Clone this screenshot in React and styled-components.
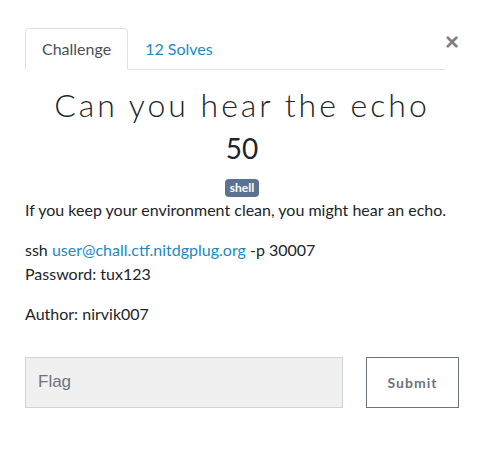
import React from "react";
import styled, { createGlobalStyle } from "styled-components";

const Global = createGlobalStyle`
  html, body { margin: 0; padding: 0; background: #fff; }
  body {
    font-family: Lato, "Liberation Sans", sans-serif;
    font-size: 16px;
    line-height: 1.5;
    color: #212529;
  }
  * { box-sizing: border-box; }
`;

const Modal = styled.div`
  width: 434px;
  margin-left: 25px;
  padding-top: 28px;
`;

const Header = styled.div`
  display: flex;
  align-items: flex-start;
`;

const Tabs = styled.ul`
  flex: 1;
  display: flex;
  list-style: none;
  margin: 0;
  padding: 0;
  border-bottom: 1px solid #dee2e6;
`;

const Tab = styled.li`
  margin-bottom: -1px;
`;

const TabLink = styled.a`
  display: block;
  padding: 8px 16px;
  border: 1px solid ${(p) => (p.$active ? "#dee2e6" : "transparent")};
  border-bottom-color: ${(p) => (p.$active ? "#fff" : "transparent")};
  border-radius: 4px 4px 0 0;
  background: ${(p) => (p.$active ? "#fff" : "transparent")};
  color: ${(p) => (p.$active ? "#495057" : "#1d88c8")};
  text-decoration: none;
  cursor: pointer;
`;

const Close = styled.button`
  width: 14px;
  padding: 0;
  border: 0;
  background: transparent;
  font-family: "Liberation Sans", sans-serif;
  font-size: 24px;
  font-weight: 700;
  line-height: 1;
  color: #000;
  opacity: 0.5;
  text-shadow: 0 1px 0 #fff;
  margin-top: 2px;
  cursor: pointer;
`;

const Title = styled.h2`
  margin: 16px 0 8px;
  text-align: center;
  font-family: Lato, sans-serif;
  font-weight: 300;
  font-size: 32px;
  line-height: 38px;
  letter-spacing: 3px;
  color: #212529;
`;

const Value = styled.h3`
  margin: 0 0 8px;
  text-align: center;
  font-family: Lato, sans-serif;
  font-weight: 400;
  font-size: 28px;
  line-height: 1.2;
  color: #212529;
`;

const Tags = styled.div`
  text-align: center;
`;

const Badge = styled.span`
  display: inline-block;
  padding: 3px 4.8px;
  font-size: 12px;
  font-weight: 700;
  line-height: 1;
  color: #fff;
  background: #5b7390;
  border-radius: 4px;
`;

const Para = styled.p`
  margin: 0 0 16px;
`;

const Link = styled.a`
  color: #1d88c8;
  text-decoration: none;
`;

const SubmitRow = styled.div`
  display: flex;
  justify-content: space-between;
  padding-top: 15px;
`;

const FlagInput = styled.input`
  width: 318px;
  height: 51px;
  padding: 0 12px;
  border: 1px solid #ced4da;
  border-radius: 0;
  background: #f0f0f0;
  font-family: "Liberation Sans", Arial, sans-serif;
  font-size: 17px;
  color: #495057;
  outline: none;
  &::placeholder { color: #6c757d; }
`;

const SubmitButton = styled.button`
  width: 93px;
  height: 51px;
  border: 1px solid #6c757d;
  border-radius: 0;
  background: #fff;
  font-family: Lato, sans-serif;
  font-size: 14px;
  font-weight: 700;
  letter-spacing: 1px;
  color: #6c757d;
  cursor: pointer;
`;

export default function App() {
  return (
    <>
      <Global />
      <Modal>
        <Header>
          <Tabs>
            <Tab>
              <TabLink $active>Challenge</TabLink>
            </Tab>
            <Tab>
              <TabLink>12 Solves</TabLink>
            </Tab>
          </Tabs>
          <Close aria-label="Close">×</Close>
        </Header>
        <Title>Can you hear the echo</Title>
        <Value>50</Value>
        <Tags>
          <Badge>shell</Badge>
        </Tags>
        <Para>If you keep your environment clean, you might hear an echo.</Para>
        <Para>
          ssh <Link href="#">user@chall.ctf.nitdgplug.org</Link> -p 30007
          <br />
          Password: tux123
        </Para>
        <Para>Author: nirvik007</Para>
        <SubmitRow>
          <FlagInput placeholder="Flag" />
          <SubmitButton>Submit</SubmitButton>
        </SubmitRow>
      </Modal>
    </>
  );
}
